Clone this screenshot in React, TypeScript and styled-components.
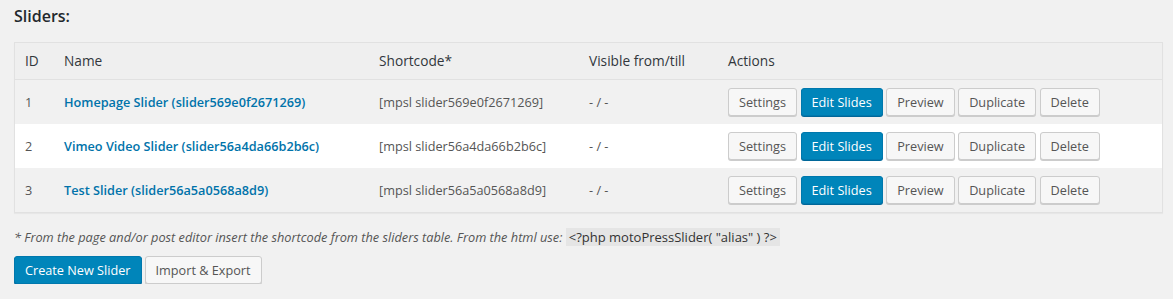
import React from "react";
import styled, { createGlobalStyle } from "styled-components";

const GlobalStyle = createGlobalStyle`
  html, body {
    margin: 0;
    padding: 0;
    background: #f1f1f1;
  }
  body {
    font-family: "Open Sans", "Noto Sans", sans-serif;
    font-size: 13px;
    color: #444;
  }
`;

const Wrap = styled.div`
  padding: 5px 10px 0 14px;
`;

const Title = styled.h3`
  margin: 0 0 15px;
  font-size: 16px;
  line-height: 22px;
  font-weight: 600;
  color: #23282d;
`;

const Table = styled.table`
  width: 100%;
  border-collapse: collapse;
  border: 1px solid #e1e1e1;
  box-shadow: 0 1px 1px rgba(0, 0, 0, 0.04);
  table-layout: fixed;
  background: #fff;
`;

const HeadCell = styled.th<{ $w?: number }>`
  text-align: left;
  font-weight: 400;
  font-size: 13.7px;
  line-height: 20px;
  padding: 8px 10px;
  color: #32373c;
  background: #efefef;
  border-bottom: 1px solid #e1e1e1;
  ${(p) => (p.$w ? `width: ${p.$w}px;` : "")}
`;

const Row = styled.tr<{ $alt: boolean }>`
  background: ${(p) => (p.$alt ? "#f1f1f1" : "#fff")};
`;

const Cell = styled.td`
  padding: 8px 10px;
  font-size: 12.7px;
  line-height: 20px;
  color: #555;
  vertical-align: middle;
  white-space: nowrap;
`;

const NameLink = styled.a`
  color: #0073aa;
  font-weight: 600;
  text-decoration: none;
`;

const Actions = styled.div`
  display: flex;
  gap: 3.5px;
`;

const Button = styled.button<{ $primary?: boolean }>`
  box-sizing: border-box;
  height: 28px;
  margin: 0;
  padding: 0 10px 1px;
  font-family: "Open Sans", "Noto Sans", sans-serif;
  font-size: 12.7px;
  line-height: 26px;
  border-radius: 3px;
  border: 1px solid ${(p) => (p.$primary ? "#0078ad" : "#ccc")};
  background: ${(p) => (p.$primary ? "#0085ba" : "#f7f7f7")};
  color: ${(p) => (p.$primary ? "#fff" : "#555")};
  box-shadow: 0 1px 0 ${(p) => (p.$primary ? "#006799" : "#ccc")};
  cursor: pointer;
  white-space: nowrap;
`;

const Note = styled.p`
  margin: 14px 0 0;
  font-size: 13px;
  line-height: 20px;
  color: #555;
`;

const Italic = styled.em`
  font-style: italic;
  font-size: 12.75px;
`;

const Code = styled.code`
  font-family: "Open Sans", "Noto Sans", sans-serif;
  font-size: 13px;
  display: inline-block;
  line-height: 18px;
  padding: 0 3px;
  background: #e5e5e5;
  color: #333;
`;

const BottomBar = styled.div`
  display: flex;
  gap: 3px;
  margin-top: 9px;
`;

const sliders = [
  { id: 1, name: "Homepage Slider", alias: "slider569e0f2671269" },
  { id: 2, name: "Vimeo Video Slider", alias: "slider56a4da66b2b6c" },
  { id: 3, name: "Test Slider", alias: "slider56a5a0568a8d9" },
];

export default function App() {
  return (
    <>
      <GlobalStyle />
      <Wrap>
        <Title>Sliders:</Title>
        <Table>
          <thead>
            <tr>
              <HeadCell $w={19}>ID</HeadCell>
              <HeadCell $w={295}>Name</HeadCell>
              <HeadCell $w={190}>Shortcode*</HeadCell>
              <HeadCell $w={119}>Visible from/till</HeadCell>
              <HeadCell>Actions</HeadCell>
            </tr>
          </thead>
          <tbody>
            {sliders.map((s, i) => (
              <Row key={s.id} $alt={i % 2 === 0}>
                <Cell>{s.id}</Cell>
                <Cell>
                  <NameLink href="#">
                    {s.name} ({s.alias})
                  </NameLink>
                </Cell>
                <Cell>[mpsl {s.alias}]</Cell>
                <Cell>- / -</Cell>
                <Cell>
                  <Actions>
                    <Button>Settings</Button>
                    <Button $primary>Edit Slides</Button>
                    <Button>Preview</Button>
                    <Button>Duplicate</Button>
                    <Button>Delete</Button>
                  </Actions>
                </Cell>
              </Row>
            ))}
          </tbody>
        </Table>
        <Note>
          <Italic>
            * From the page and/or post editor insert the shortcode from the sliders table. From the html use:
          </Italic>{" "}
          <Code>&lt;?php motoPressSlider( "alias" ) ?&gt;</Code>
        </Note>
        <BottomBar>
          <Button $primary>Create New Slider</Button>
          <Button>Import &amp; Export</Button>
        </BottomBar>
      </Wrap>
    </>
  );
}
